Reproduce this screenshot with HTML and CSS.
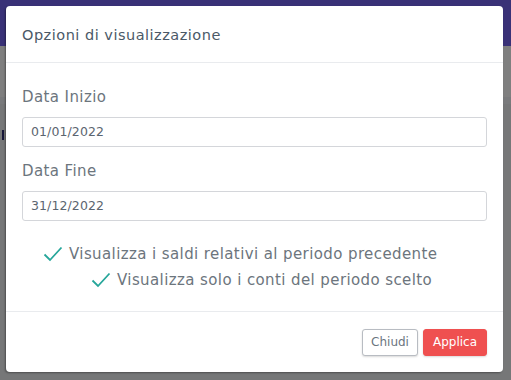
FILE: index.html
```html
<!DOCTYPE html>
<html lang="it">
<head>
<meta charset="utf-8">
<link rel="stylesheet" href="styles.css">
</head>
<body>
<div class="page">
  <div class="topbar"></div>
  <div class="band"></div>
  <div class="side-mark"></div>
</div>
<div class="overlay"></div>
<div class="modal-wrap">
  <div class="modal">
    <div class="modal-header">
      <h5 class="modal-title">Opzioni di visualizzazione</h5>
    </div>
    <div class="modal-body">
      <label class="field-label">Data Inizio</label>
      <div class="input">01/01/2022</div>
      <label class="field-label">Data Fine</label>
      <div class="input">31/12/2022</div>
      <div class="checks">
        <div class="check-row">
          <svg class="tick" viewBox="0 0 20 16" width="20" height="16"><path d="M1.5 8.5 L7 14 L18.5 1.5" fill="none" stroke="#26a69a" stroke-width="1.8"/></svg>
          <span>Visualizza i saldi relativi al periodo precedente</span>
        </div>
        <div class="check-row">
          <svg class="tick" viewBox="0 0 20 16" width="20" height="16"><path d="M1.5 8.5 L7 14 L18.5 1.5" fill="none" stroke="#26a69a" stroke-width="1.8"/></svg>
          <span>Visualizza solo i conti del periodo scelto</span>
        </div>
      </div>
    </div>
    <div class="modal-footer">
      <button class="btn btn-light">Chiudi</button>
      <button class="btn btn-danger">Applica</button>
    </div>
  </div>
</div>
</body>
</html>
```
FILE: styles.css
```css
* { box-sizing: border-box; }
html, body { margin: 0; padding: 0; }
body {
  width: 511px; height: 380px; overflow: hidden;
  background: #eceef1;
  font-family: "DejaVu Sans", "Open Sans", sans-serif;
  position: relative;
}
.page { width: 511px; height: 380px; background: linear-gradient(#fff 0 100px, #eceef1 100px); }
.topbar { height: 46px; background: #7363ee; }
.band { margin-top: 51px; height: 7px; background: #f3f5f8; }
.side-mark { position: absolute; left: 2px; top: 130px; width: 2px; height: 10px; background: #2d2c70; }
.overlay { position: absolute; inset: 0; background: rgba(0,0,0,0.5); }
.modal-wrap { position: absolute; inset: 0; padding: 6px 8px 8px 6px; }
.modal {
  background: #fff; border-radius: 4px; height: 366px;
  box-shadow: -1px 1px 2px rgba(0,0,0,0.35);
  display: flex; flex-direction: column;
}
.modal-header { height: 57px; padding: 0 16px; display: flex; align-items: center; border-bottom: 1px solid #e9ebee; }
.modal-title { margin: 2px 0 0; font-size: 14.5px; font-weight: 400; color: #4b5967; letter-spacing: 0.5px; }
.modal-body { padding: 24px 16px 0; flex: 1; border-bottom: 1px solid #e9ebee; }
.field-label { display: block; font-size: 15px; color: #6c757d; line-height: 20px; margin-bottom: 10px; letter-spacing: 0.4px; }
.input {
  height: 30px; border: 1px solid #d4d6da; border-radius: 3px;
  font-size: 12.5px; color: #5b6570; padding: 0 8px; line-height: 28px; margin-bottom: 14px; letter-spacing: 0.1px;
}
.checks { margin-top: 20px; }
.check-row { display: flex; align-items: center; font-size: 15px; color: #6c757d; height: 26px; gap: 6px; letter-spacing: 0.4px; }
.check-row:first-child { padding-left: 21px; }
.check-row:last-child { padding-left: 69px; }
.tick { flex: none; }
.modal-footer { height: 60px; display: flex; justify-content: flex-end; align-items: center; gap: 5px; padding: 0 16px 0; }
.btn { font-family: inherit; font-size: 12px; height: 27px; border-radius: 3px; padding: 0 9px; cursor: pointer; }
.btn-light { background: #fff; border: 1px solid #b8bcc2; color: #6b7580; box-shadow: 0 1px 2px rgba(0,0,0,0.15); padding: 0 8px; }
.btn-danger { background: #ef5050; border: 1px solid #ef5050; color: #fff; font-weight: 400; box-shadow: 0 1px 2px rgba(0,0,0,0.15); }
```
